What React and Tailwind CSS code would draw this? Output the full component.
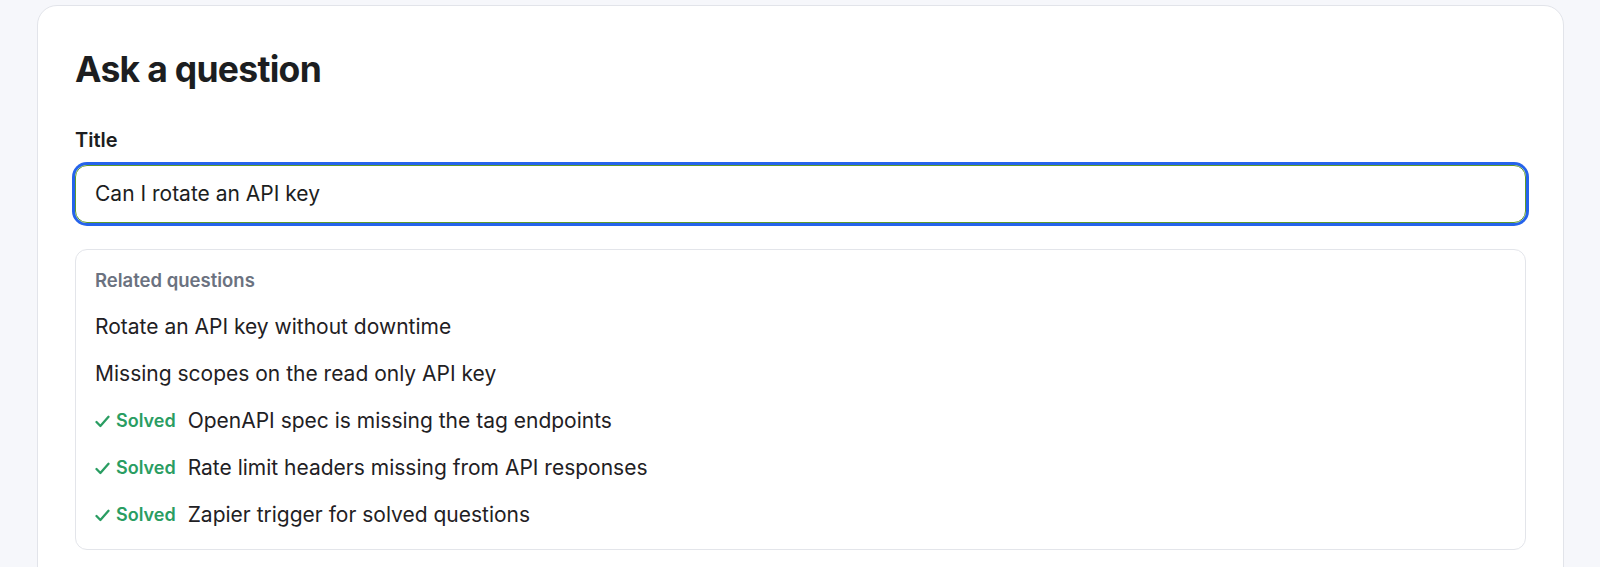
import React from "react";

const related = [
  { title: "Rotate an API key without downtime", solved: false },
  { title: "Missing scopes on the read only API key", solved: false },
  { title: "OpenAPI spec is missing the tag endpoints", solved: true },
  { title: "Rate limit headers missing from API responses", solved: true },
  { title: "Zapier trigger for solved questions", solved: true },
];

function Check() {
  return (
    <svg width="15" height="13" viewBox="0 0 15 13" fill="none" className="shrink-0">
      <path d="M1.5 7 L5.4 11 L13.5 1.8" stroke="#2a9d62" strokeWidth="2.3" strokeLinecap="round" strokeLinejoin="round" />
    </svg>
  );
}

export default function App() {
  return (
    <div
      className="h-[567px] overflow-hidden bg-[#f6f7fb] pl-[37px] pr-[36px] pt-[5px]"
      style={{ fontFamily: "Inter, 'Noto Sans', sans-serif" }}
    >
      <div className="rounded-[20px] border border-[#e2e4ea] bg-white px-[37px] pt-[42px] pb-[40px] text-[#1c1e21]">
        <h1 className="text-[35.5px] font-bold leading-[44px] tracking-[-0.02em]">Ask a question</h1>
        <label className="mt-[36px] block text-[20px] font-semibold leading-[24px]">Title</label>
        <div className="mt-[13px] h-[58px] rounded-[12px] border-[1.5px] border-[#5f9a2c] shadow-[0_0_0_3px_#2563eb] flex items-center px-[19px]">
          <span className="text-[21px] leading-[28px]">Can I rotate an API key</span>
        </div>
        <div className="mt-[26px] rounded-[12px] border border-[#e3e5ea] px-[19px] pt-[18px] pb-[20px]">
          <div className="text-[18.5px] font-semibold leading-[24px] text-[#6b7280]">Related questions</div>
          <ul className="mt-[21px] flex flex-col gap-[19px]">
            {related.map((r) => (
              <li key={r.title} className="flex items-center text-[21px] leading-[28px] text-[#1f2124]">
                {r.solved && (
                  <span className="mr-[12px] flex items-center gap-[6px] text-[18px] font-semibold text-[#2a9d62]">
                    <Check />
                    <span>Solved</span>
                  </span>
                )}
                <span>{r.title}</span>
              </li>
            ))}
          </ul>
        </div>
      </div>
    </div>
  );
}
